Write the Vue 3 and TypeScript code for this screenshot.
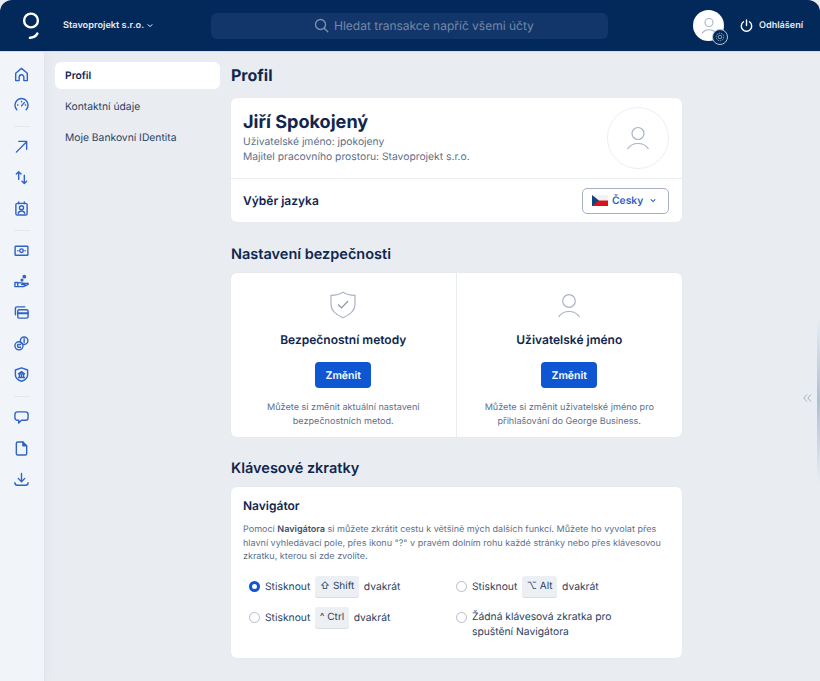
<script setup lang="ts">
import { ref } from 'vue'

const menu = ['Profil', 'Kontaktní údaje', 'Moje Bankovní IDentita']
const activeMenu = ref('Profil')

const shortcut = ref('shift')

const secureCards = [
  { title: 'Bezpečnostní metody', icon: 'shield', text: ['Můžete si změnit aktuální nastavení', 'bezpečnostních metod.'] },
  { title: 'Uživatelské jméno', icon: 'user', text: ['Můžete si změnit uživatelské jméno pro', 'přihlašování do George Business.'] }
]
</script>

<template>
  <div class="app">
    <header class="top">
      <svg class="logo" width="24" height="28" viewBox="0 0 24 28" fill="none" stroke="#fff">
        <circle cx="11" cy="8.500" r="6.900" stroke-width="2.400" />
        <path d="M10 25.800c3.400-.3 5.800-1.600 7.300-4.200" stroke-width="2.600" stroke-linecap="round" />
      </svg>
      <div class="company">
        Stavoprojekt s.r.o.
        <svg width="6" height="5" viewBox="0 0 8 6" fill="none" stroke="#fff" stroke-width="1.300"><path d="M1 1.500l3 3 3-3" /></svg>
      </div>
      <div class="search">
        <svg width="15" height="15" viewBox="0 0 15 15" fill="none" stroke="#7f93b1" stroke-width="1.300"><circle cx="6.500" cy="6.500" r="5" /><path d="M10.200 10.200l3.600 3.600" stroke-linecap="round" /></svg>
        <span>Hledat transakce napříč všemi účty</span>
      </div>
      <div class="avatar">
        <svg width="16" height="18" viewBox="0 0 16 18" fill="none" stroke="#a9b4c6" stroke-width="1.100"><circle cx="8" cy="5.500" r="4" /><path d="M1 16.500c1.500-2.600 4-3.800 7-3.800s5.500 1.200 7 3.800" /></svg>
        <span class="gear">
          <svg width="10" height="10" viewBox="0 0 10 10" fill="none" stroke="#8ea0b9" stroke-width="1"><circle cx="5" cy="5" r="3.800" stroke-dasharray="1.500 .8" /><circle cx="5" cy="5" r="1.800" /></svg>
        </span>
      </div>
      <div class="logout">
        <svg width="13" height="14" viewBox="0 0 13 14" fill="none" stroke="#fff" stroke-width="1.400" stroke-linecap="round"><path d="M6.500 1v5.500" /><path d="M3.500 2.800a5.200 5.200 0 1 0 6 0" /></svg>
        Odhlášení
      </div>
    </header>

    <div class="body">
      <nav class="rail">
        <div class="rail-group">
          <svg viewBox="0 0 16 16"><path d="M1.800 14.500V6.600L8 1.500l6.200 5.100v7.900h-3.700v-3.700a2.500 2.500 0 0 0-5 0v3.700z" /></svg>
          <svg viewBox="0 0 16 16"><path d="M3 13.500a7 7 0 1 1 10 0" /><path d="M8 9.500l3-3.500" /><path d="M3.800 8.500h.4M8 4.800v.4M12 8.500h.4" /></svg>
        </div>
        <div class="rail-group">
          <svg viewBox="0 0 16 16"><path d="M2.500 14L13.500 3M5 2.500h8.500V11" /></svg>
          <svg viewBox="0 0 16 16"><path d="M5 10V1.800M2.500 4.300L5 1.800l2.500 2.500M11 5.500v9M8.500 12L11 14.500l2.500-2.500" /></svg>
          <svg viewBox="0 0 16 16"><rect x="2" y="2.500" width="12" height="12.500" rx="1.500" /><path d="M5 1v2M11 1v2" /><circle cx="8" cy="7.200" r="2.200" /><path d="M4.500 13c.6-1.800 2-2.400 3.500-2.400s2.900.6 3.500 2.400" /></svg>
        </div>
        <div class="rail-group">
          <svg viewBox="0 0 16 16"><rect x="1.200" y="3.500" width="13.600" height="9.500" rx=".6" /><circle cx="8" cy="8.200" r="1.900" /><path d="M4 8.200h.3M11.700 8.200h.3" /></svg>
          <svg viewBox="0 0 16 16"><circle cx="11" cy="2.800" r="1.300" fill="#2f63c8" /><circle cx="8.500" cy="6.500" r=".9" fill="#2f63c8" /><path d="M1 9h3v4.500H1zM4 9.800c2-1 3-.8 4.500 0H11c1 0 1 1.500 0 1.500H8M11 10.800l3.200-1c1-.2 1.200 1 .5 1.500L10 13.500H4" /></svg>
          <svg viewBox="0 0 16 16"><path d="M1.500 10.500V3.500A1.500 1.500 0 0 1 3 2h8.500" /><rect x="4" y="5" width="11" height="9" rx="1.500" /><path d="M4 8.800h11" stroke-width="2" /></svg>
          <svg viewBox="0 0 16 16"><circle cx="5.300" cy="10.500" r="4.300" /><circle cx="10.800" cy="5" r="4" /><path d="M7 9H4.500a1.800 1.800 0 0 0 0 3H7M10.800 3v4" /></svg>
          <svg viewBox="0 0 16 16"><path d="M8 1l6.500 2.200v5.600c0 3-3 5.200-6.500 6.400-3.500-1.200-6.500-3.400-6.500-6.400V3.200z" /><path d="M4.800 7.300L8 5l3.200 2.300zM5.800 7.800v3M8 7.800v3M10.200 7.800v3M4.800 11.200h6.400" /></svg>
        </div>
        <div class="rail-group">
          <svg viewBox="0 0 16 16"><path d="M3.500 2h9A2.500 2.500 0 0 1 15 4.500v4A2.500 2.500 0 0 1 12.500 11H8l-3 3v-3H3.500A2.500 2.500 0 0 1 1 8.500v-4A2.500 2.500 0 0 1 3.500 2z" /></svg>
          <svg viewBox="0 0 16 16"><path d="M2.500 2.500A1.500 1.500 0 0 1 4 1h5.500L13.500 5v8.500A1.500 1.500 0 0 1 12 15H4a1.500 1.500 0 0 1-1.500-1.500z" /><path d="M9.500 1v4h4" fill="#2f63c8" /></svg>
          <svg viewBox="0 0 16 16"><path d="M8 1.500V10M4.500 6.800L8 10.300l3.500-3.500M1 11.500c0 1.800 1 2.700 2.500 2.700h9c1.500 0 2.500-.9 2.500-2.700" /></svg>
        </div>
      </nav>

      <aside class="submenu">
        <a v-for="item in menu" :key="item" class="submenu-item" :class="{ active: item === activeMenu }">{{ item }}</a>
      </aside>

      <main class="content">
        <h1>Profil</h1>
        <section class="card profile">
          <div class="profile-head">
            <div>
              <div class="person">Jiří Spokojený</div>
              <p>Uživatelské jméno: jpokojeny</p>
              <p>Majitel pracovního prostoru: Stavoprojekt s.r.o.</p>
            </div>
            <div class="photo">
              <svg width="24" height="24" viewBox="0 0 24 24" fill="none" stroke="#a9b4c6" stroke-width="1.200"><circle cx="12" cy="7.500" r="6" /><path d="M1.500 23c2.500-3.800 6-5.500 10.500-5.500S20 19.200 22.500 23" /></svg>
            </div>
          </div>
          <div class="lang-row">
            <strong>Výběr jazyka</strong>
            <button class="lang">
              <svg class="flag" width="16" height="11" viewBox="0 0 16 11"><rect width="16" height="5.500" fill="#f1f2f4" /><rect y="5.500" width="16" height="5.500" fill="#d7141a" /><path d="M0 0l7 5.500L0 11z" fill="#11457e" /></svg>
              Česky
              <svg width="6" height="5" viewBox="0 0 8 6" fill="none" stroke="#2a5fc4" stroke-width="1.400"><path d="M1 1.500l3 3 3-3" /></svg>
            </button>
          </div>
        </section>

        <h2>Nastavení bezpečnosti</h2>
        <section class="card secure">
          <div v-for="c in secureCards" :key="c.title" class="secure-col">
            <div class="secure-icon">
              <svg v-if="c.icon === 'shield'" width="26" height="28" viewBox="0 0 26 28" fill="none" stroke="#a9b4c6" stroke-width="1.200"><path d="M13 1.200c3 2 6.500 3 12 3.200v9c0 6-4.500 10-12 13.400C5.500 23.400 1 19.400 1 13.400v-9c5.500-.2 9-1.200 12-3.200z" /><path d="M8 13.500l3.500 3.500 6.500-7" stroke="#8a97ab" /></svg>
              <svg v-else width="24" height="25" viewBox="0 0 24 25" fill="none" stroke="#a9b4c6" stroke-width="1.200"><circle cx="12" cy="8" r="6.300" /><path d="M1.500 24c2.500-3.800 6-5.500 10.500-5.500S20 20.200 22.500 24" /></svg>
            </div>
            <h3>{{ c.title }}</h3>
            <button class="primary">Změnit</button>
            <p>{{ c.text[0] }}<br />{{ c.text[1] }}</p>
          </div>
        </section>

        <h2 class="keys-title">Klávesové zkratky</h2>
        <section class="card nav-card">
          <h4>Navigátor</h4>
          <p class="desc">Pomocí <b>Navigátora</b> si můžete zkrátit cestu k většině mých dalších funkcí. Můžete ho vyvolat přes<br />hlavní vyhledávací pole, přes ikonu "?" v pravém dolním rohu každé stránky nebo přes klávesovou<br />zkratku, kterou si zde zvolíte.</p>
          <div class="options">
            <label class="opt" @click="shortcut = 'shift'">
              <i class="radio" :class="{ on: shortcut === 'shift' }"></i>Stisknout <kbd>⇧ Shift</kbd> dvakrát
            </label>
            <label class="opt" @click="shortcut = 'alt'">
              <i class="radio" :class="{ on: shortcut === 'alt' }"></i>Stisknout <kbd>⌥ Alt</kbd> dvakrát
            </label>
            <label class="opt" @click="shortcut = 'ctrl'">
              <i class="radio" :class="{ on: shortcut === 'ctrl' }"></i>Stisknout <kbd>^ Ctrl</kbd> dvakrát
            </label>
            <label class="opt multi" @click="shortcut = 'none'">
              <i class="radio" :class="{ on: shortcut === 'none' }"></i><span>Žádná klávesová zkratka pro<br />spuštění Navigátora</span>
            </label>
          </div>
        </section>
      </main>

      <div class="collapse">
        <svg width="9" height="8" viewBox="0 0 9 8" fill="none" stroke="#a6afbc" stroke-width="1"><path d="M4 .5L.8 4 4 7.500M8 .5L4.800 4 8 7.500" /></svg>
      </div>
      <div class="edge"></div>
    </div>
  </div>
</template>

<style>
html, body {
  margin: 0;
  background: #fff;
}
</style>

<style scoped>
.app {
  width: 820px;
  height: 681px;
  overflow: hidden;
  display: flex;
  flex-direction: column;
  font-family: Inter, 'Liberation Sans', sans-serif;
  text-rendering: geometricPrecision;
  color: #10264e;
  background: #e9edf2;
}

.top {
  height: 51px;
  flex: none;
  display: flex;
  align-items: center;
  background: #03295a;
  border-radius: 12px 12px 0 0;
  border-bottom: 1px solid #d5dde7;
  box-sizing: content-box;
  color: #fff;
}

.logo {
  margin-left: 20px;
  flex: none;
}

.company {
  margin-left: 19px;
  width: 148px;
  font-size: 9.200px;
  font-weight: 600;
  display: flex;
  align-items: center;
  gap: 3px;
  color: #e6ebf2;
}

.search {
  width: 397px;
  height: 26px;
  background: #12366a;
  border-radius: 6px;
  display: flex;
  align-items: center;
  padding-left: 103px;
  box-sizing: border-box;
  gap: 5px;
  font-size: 12px;
  color: #7388a8;
}

.avatar {
  position: relative;
  margin-left: 85px;
  width: 31px;
  height: 31px;
  border-radius: 50%;
  background: #fff;
  display: flex;
  align-items: center;
  justify-content: center;
}

.gear {
  position: absolute;
  right: -4px;
  bottom: -4px;
  width: 14px;
  height: 14px;
  border-radius: 50%;
  background: #03295a;
  border: 1px solid #b9c6d8;
  display: flex;
  align-items: center;
  justify-content: center;
}

.logout {
  margin-left: 16px;
  display: flex;
  align-items: center;
  gap: 6px;
  font-size: 9.100px;
  font-weight: 600;
  color: #e6ebf2;
}

.body {
  flex: 1;
  display: flex;
  position: relative;
  min-height: 0;
}

.rail {
  width: 45px;
  flex: none;
  box-sizing: border-box;
  background: #f1f4f8;
  border-right: 1px solid #e1e5eb;
  box-shadow: 3px 0 8px rgba(40, 60, 90, 0.03);
  display: flex;
  flex-direction: column;
  align-items: center;
  padding: 15px 1px 0 0;
}

.rail-group {
  display: flex;
  flex-direction: column;
  align-items: center;
  gap: 16px;
  padding-bottom: 14px;
  margin-bottom: 12px;
  width: 16px;
  border-bottom: 1px solid #e3e7ec;
}

.rail-group:first-child {
  gap: 15px;
}

.rail-group:nth-child(3) {
  margin-bottom: 13px;
}

.rail-group:last-child {
  border-bottom: 0;
}

.rail svg {
  width: 15px;
  height: 15px;
  flex: none;
  fill: none;
  stroke: #2f63c8;
  stroke-width: 1.500;
  stroke-linejoin: round;
  stroke-linecap: round;
}

.submenu {
  width: 165px;
  margin-left: 10px;
  padding-top: 10px;
  flex: none;
  display: flex;
  flex-direction: column;
  gap: 4px;
}

.submenu-item {
  height: 27px;
  line-height: 28.500px;
  padding-left: 10px;
  font-size: 10.300px;
  color: #2b3f62;
  border-radius: 6px;
}

.submenu-item.active {
  background: #fff;
  font-weight: 600;
  color: #10264e;
}

.content {
  width: 451px;
  margin-left: 11px;
  flex: none;
}

h1 {
  margin: 13px 0 13px;
  font-size: 16px;
  line-height: 20px;
  font-weight: 700;
}

h2 {
  margin: 24px 0 9px;
  font-size: 14.500px;
  line-height: 18px;
  font-weight: 600;
}

.card {
  background: #fff;
  border-radius: 6px;
  box-shadow: 0 0 2px rgba(30, 50, 80, 0.05);
}

.profile-head {
  height: 81px;
  padding: 13px 13px 0 12px;
  box-sizing: border-box;
  display: flex;
  justify-content: space-between;
  border-bottom: 1px solid #e9edf2;
}

.person {
  font-size: 18.100px;
  line-height: 23px;
  font-weight: 700;
}

.profile-head p {
  margin: 0;
  font-size: 10.300px;
  line-height: 15px;
  color: #5c6f8c;
}

.profile-head p:first-of-type {
  margin-top: 1px;
}

.photo {
  width: 62px;
  height: 62px;
  margin-top: -4px;
  border: 1px solid #eceff3;
  border-radius: 50%;
  box-sizing: border-box;
  display: flex;
  align-items: center;
  justify-content: center;
}

.lang-row {
  height: 43px;
  padding: 0 13px 0 12px;
  display: flex;
  align-items: center;
  justify-content: space-between;
}

.lang-row strong {
  font-size: 12px;
  font-weight: 600;
}

.lang {
  width: 87px;
  height: 26px;
  border: 1px solid #a4b1c4;
  border-radius: 5px;
  background: #fff;
  font: 600 10.300px Inter, sans-serif;
  text-rendering: geometricPrecision;
  color: #2a5fc4;
  display: flex;
  align-items: center;
  padding: 0 0 0 9px;
  box-sizing: border-box;
}

.flag {
  margin-right: 4px;
}

.lang svg:last-child {
  margin-left: 7px;
}

.secure {
  display: grid;
  grid-template-columns: 1fr 1fr;
  height: 164px;
}

.secure-col {
  display: flex;
  flex-direction: column;
  align-items: center;
  padding-top: 18px;
  box-sizing: border-box;
}

.secure-col:first-child {
  border-right: 1px solid #e9edf2;
}

.secure-icon {
  height: 28px;
  display: flex;
  align-items: center;
}

.secure-col h3 {
  margin: 13px 0 0;
  font-size: 12px;
  line-height: 16px;
  font-weight: 600;
}

.primary {
  margin-top: 14px;
  width: 56px;
  height: 26px;
  border: 0;
  border-radius: 4px;
  background: #0e56d2;
  color: #fff;
  font: 600 10.500px Inter, sans-serif;
  text-rendering: geometricPrecision;
}

.secure-col p {
  margin: 13px 0 0;
  text-align: center;
  font-size: 9.100px;
  line-height: 13.500px;
  color: #5c6f8c;
}

.keys-title {
  margin-top: 23px;
}

.nav-card {
  padding: 12px 12px 0;
  height: 171px;
  box-sizing: border-box;
}

h4 {
  margin: 0 0 10px;
  font-size: 12px;
  line-height: 14px;
  font-weight: 600;
}

.desc {
  margin: 0;
  font-size: 9.040px;
  line-height: 13.500px;
  color: #5c6f8c;
  white-space: nowrap;
}

.desc b {
  font-weight: 600;
  color: #3b4f70;
}

.options {
  display: grid;
  grid-template-columns: 207px 1fr;
  row-gap: 9px;
  margin-top: 12px;
  padding-left: 6px;
}

.opt {
  display: flex;
  align-items: center;
  font-size: 10.300px;
  color: #2b3f62;
  gap: 5px;
  height: 22px;
}

.opt.multi {
  align-items: flex-start;
  line-height: 15.500px;
  padding-top: 3px;
  height: auto;
}

.radio {
  width: 11px;
  height: 11px;
  box-sizing: border-box;
  border: 1px solid #b5bdc9;
  border-radius: 50%;
  flex: none;
}

.radio.on {
  border: 3px solid #0e56d2;
}

.multi .radio {
  margin-top: 2px;
}

kbd {
  font: 400 10px Inter, 'DejaVu Sans', sans-serif;
  text-rendering: geometricPrecision;
  background: #eceff3;
  border-radius: 3px;
  padding: 0 4.500px;
  height: 21px;
  line-height: 20px;
  box-shadow: 0 1px 0 #d8dde4;
  color: #2b3f62;
}

.collapse {
  position: absolute;
  left: 803px;
  top: 342px;
  display: flex;
}

.edge {
  position: absolute;
  right: 0;
  top: 266px;
  width: 3px;
  height: 165px;
  background: linear-gradient(to bottom, rgba(150, 172, 198, 0), rgba(150, 172, 198, 0.7) 50%, rgba(150, 172, 198, 0));
}
</style>
